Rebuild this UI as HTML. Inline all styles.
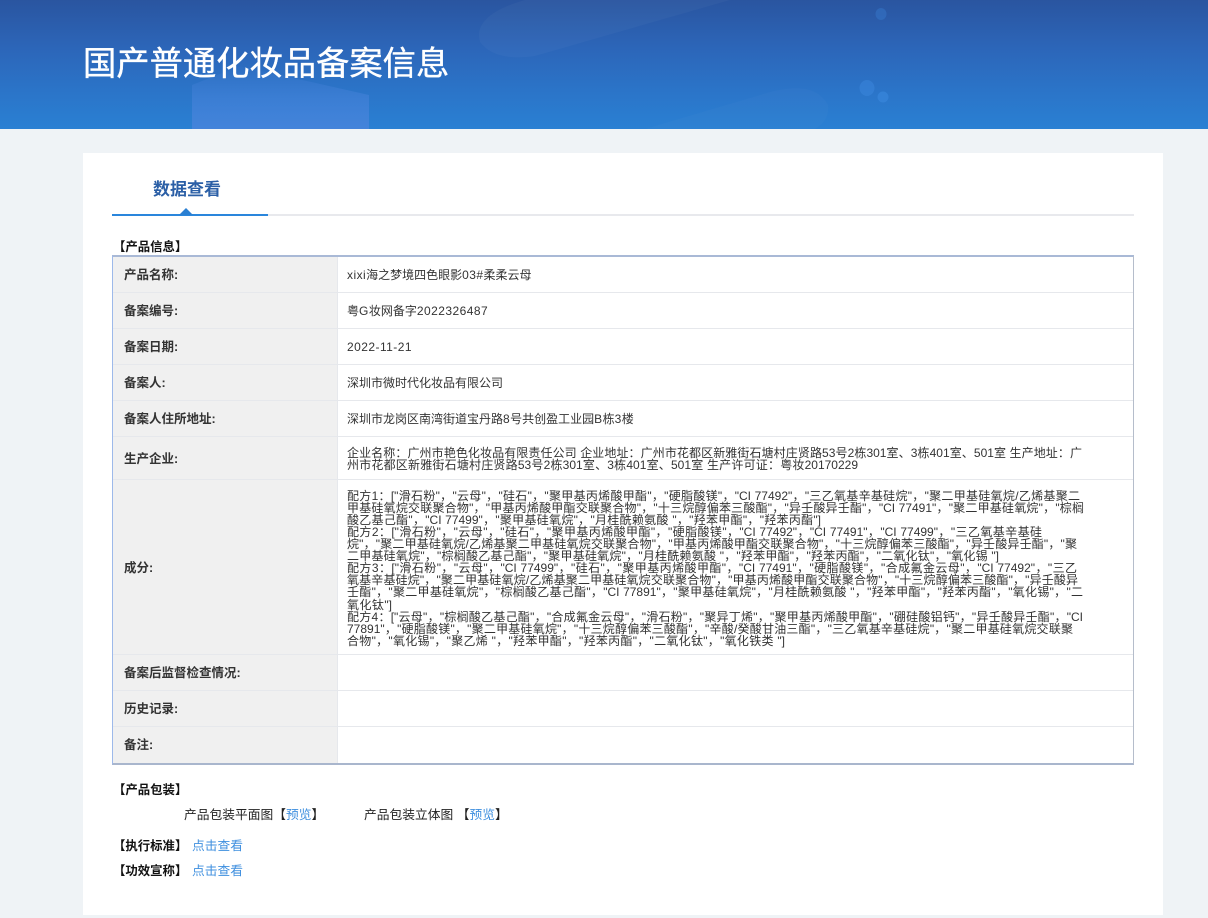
<!DOCTYPE html>
<html lang="zh-CN"><head><meta charset="utf-8"><title>国产普通化妆品备案信息</title>
<style>
html,body{margin:0;padding:0}
body{width:1208px;height:918px;position:relative;overflow:hidden;background:#eff3f6;font-family:"Liberation Sans","Noto Sans CJK SC",sans-serif;color:#333}
.a{position:absolute;white-space:nowrap}
.hd{position:absolute;left:0;top:0;width:1208px;height:129px;background:linear-gradient(180deg,#2a55a0 0%,#2c66b9 38%,#2b74c8 70%,#2a80d3 100%);overflow:hidden}
.card{position:absolute;left:83px;top:153px;width:1080px;height:762px;background:#fff}
.tb{position:absolute;left:112px;top:255px;width:1020px;height:506px;border:1px solid #a9b9d6;border-left-color:#9db9ea;border-top-width:2px;border-right-color:#b5bdcb;border-bottom-color:#a9b6cd;border-bottom-width:2px;background:#fff}
.r{position:absolute;left:113px;width:1020px;border-bottom:1px solid #e6e8ec}
.l{position:absolute;left:113px;width:224px;background:#f0f0f0;border-right:1px solid #e6e8ec;border-bottom:1px solid #e6e8ec}
.lb{position:absolute;left:124px;font-size:12.5px;font-weight:bold;color:#333;white-space:nowrap;line-height:18px}
.v{position:absolute;left:347px;font-size:12px;color:#333;white-space:nowrap;line-height:18px}
.v b{font-weight:normal;letter-spacing:.45px}
.s{position:absolute;left:113px;font-size:12.4px;font-weight:bold;color:#111;white-space:nowrap;line-height:16px}
.t{position:absolute;font-size:12.75px;color:#222;white-space:nowrap;line-height:16px}
a{color:#3f8fdf;text-decoration:none}
.i div{position:absolute;left:347px;font-size:12px;line-height:12px;height:12px;color:#333;white-space:normal;text-align:justify;text-align-last:justify;overflow:visible}
</style></head><body>
<div class="hd">
<svg width="1208" height="129" style="position:absolute;left:0;top:0">
<defs><linearGradient id="g" x1="0" y1="0" x2="0" y2="1"><stop offset="0" stop-color="#4a84dc" stop-opacity=".05"/><stop offset=".5" stop-color="#4a84dc" stop-opacity=".5"/><stop offset="1" stop-color="#4a84dc" stop-opacity=".8"/></linearGradient></defs>
<path d="M192 85L240 66L369 95V129H192Z" fill="url(#g)"/>
<path d="M525 0H730L535 56Q495 62 480 42Q472 15 525 0Z" fill="#fff" opacity=".03"/>
<path d="M645 129L770 92Q815 80 828 105Q830 120 815 129Z" fill="#fff" opacity=".02"/>
<ellipse cx="881" cy="14" rx="5.5" ry="6" fill="#3d8ae0" opacity=".3"/>
<ellipse cx="867" cy="88" rx="7.5" ry="8" fill="#3d8ae0" opacity=".45"/>
<ellipse cx="883" cy="97" rx="5.5" ry="5.5" fill="#3d8ae0" opacity=".55"/>
</svg>
<div class="a" style="left:83px;top:40px;font-size:33.3px;line-height:50px;color:#fff;-webkit-text-stroke:.35px #fff">国产普通化妆品备案信息</div>
</div>
<div class="card"></div>
<div class="a" style="left:153px;top:179px;font-size:17px;font-weight:bold;line-height:22px;color:#2b5fa6">数据查看</div>
<div class="a" style="left:112px;top:214px;width:1022px;height:2px;background:#e8e9ed"></div>
<div class="a" style="left:112px;top:214px;width:156px;height:2px;background:#2a86dc"></div>
<svg class="a" style="left:179px;top:208px" width="14" height="7"><path d="M0 7L7 0L14 7Z" fill="#2a7fd2"/></svg>
<div class="s" style="top:239px">【产品信息】</div>
<div class="tb"></div>
<div class="l" style="top:257px;height:35px"></div><div class="r" style="top:292px;height:0"></div>
<div class="l" style="top:293px;height:35px"></div><div class="r" style="top:328px;height:0"></div>
<div class="l" style="top:329px;height:35px"></div><div class="r" style="top:364px;height:0"></div>
<div class="l" style="top:365px;height:35px"></div><div class="r" style="top:400px;height:0"></div>
<div class="l" style="top:401px;height:35px"></div><div class="r" style="top:436px;height:0"></div>
<div class="l" style="top:437px;height:42px"></div><div class="r" style="top:479px;height:0"></div>
<div class="l" style="top:480px;height:174px"></div><div class="r" style="top:654px;height:0"></div>
<div class="l" style="top:655px;height:35px"></div><div class="r" style="top:690px;height:0"></div>
<div class="l" style="top:691px;height:35px"></div><div class="r" style="top:726px;height:0"></div>
<div class="l" style="top:727px;height:36px;border-bottom:0"></div>
<div class="lb" style="top:266px">产品名称:</div><div class="v" style="top:266px"><b>xixi</b>海之梦境四色眼影<b>03#</b>柔柔云母</div>
<div class="lb" style="top:302px">备案编号:</div><div class="v" style="top:302px">粤<b>G</b>妆网备字<b>2022326487</b></div>
<div class="lb" style="top:338px">备案日期:</div><div class="v" style="top:338px"><b>2022-11-21</b></div>
<div class="lb" style="top:374px">备案人:</div><div class="v" style="top:374px">深圳市微时代化妆品有限公司</div>
<div class="lb" style="top:410px">备案人住所地址:</div><div class="v" style="top:410px">深圳市龙岗区南湾街道宝丹路<b>8</b>号共创盈工业园<b>B</b>栋<b>3</b>楼</div>
<div class="lb" style="top:450px">生产企业:</div>
<div class="i">
<div style="top:447px;width:735px">企业名称：广州市艳色化妆品有限责任公司 企业地址：广州市花都区新雅街石塘村庄贤路53号2栋301室、3栋401室、501室 生产地址：广</div>
<div style="top:459px;width:511px">州市花都区新雅街石塘村庄贤路53号2栋301室、3栋401室、501室 生产许可证：粤妆20170229</div>
<div style="top:490px;width:733px">配方1：["滑石粉"，"云母"，"硅石"，"聚甲基丙烯酸甲酯"，"硬脂酸镁"，"CI 77492"，"三乙氧基辛基硅烷"，"聚二甲基硅氧烷/乙烯基聚二</div>
<div style="top:502px;width:737px">甲基硅氧烷交联聚合物"，"甲基丙烯酸甲酯交联聚合物"，"十三烷醇偏苯三酸酯"，"异壬酸异壬酯"，"CI 77491"，"聚二甲基硅氧烷"，"棕榈</div>
<div style="top:514px;width:474px">酸乙基己酯"，"CI 77499"，"聚甲基硅氧烷"，"月桂酰赖氨酸 "，"羟苯甲酯"，"羟苯丙酯"]</div>
<div style="top:526px;width:695px">配方2：["滑石粉"，"云母"，"硅石"，"聚甲基丙烯酸甲酯"，"硬脂酸镁"，"CI 77492"，"CI 77491"，"CI 77499"，"三乙氧基辛基硅</div>
<div style="top:538px;width:730px">烷"，"聚二甲基硅氧烷/乙烯基聚二甲基硅氧烷交联聚合物"，"甲基丙烯酸甲酯交联聚合物"，"十三烷醇偏苯三酸酯"，"异壬酸异壬酯"，"聚</div>
<div style="top:550px;width:652px">二甲基硅氧烷"，"棕榈酸乙基己酯"，"聚甲基硅氧烷"，"月桂酰赖氨酸 "，"羟苯甲酯"，"羟苯丙酯"，"二氧化钛"，"氧化锡 "]</div>
<div style="top:562px;width:730px">配方3：["滑石粉"，"云母"，"CI 77499"，"硅石"，"聚甲基丙烯酸甲酯"，"CI 77491"，"硬脂酸镁"，"合成氟金云母"，"CI 77492"，"三乙</div>
<div style="top:574px;width:731px">氧基辛基硅烷"，"聚二甲基硅氧烷/乙烯基聚二甲基硅氧烷交联聚合物"，"甲基丙烯酸甲酯交联聚合物"，"十三烷醇偏苯三酸酯"，"异壬酸异</div>
<div style="top:586px;width:736px">壬酯"，"聚二甲基硅氧烷"，"棕榈酸乙基己酯"，"CI 77891"，"聚甲基硅氧烷"，"月桂酰赖氨酸 "，"羟苯甲酯"，"羟苯丙酯"，"氧化锡"，"二</div>
<div style="top:599px;width:45px">氧化钛"]</div>
<div style="top:611px;width:736px">配方4：["云母"，"棕榈酸乙基己酯"，"合成氟金云母"，"滑石粉"，"聚异丁烯"，"聚甲基丙烯酸甲酯"，"硼硅酸铝钙"，"异壬酸异壬酯"，"CI</div>
<div style="top:623px;width:726px">77891"，"硬脂酸镁"，"聚二甲基硅氧烷"，"十三烷醇偏苯三酸酯"，"辛酸/癸酸甘油三酯"，"三乙氧基辛基硅烷"，"聚二甲基硅氧烷交联聚</div>
<div style="top:635px;width:438px">合物"，"氧化锡"，"聚乙烯 "，"羟苯甲酯"，"羟苯丙酯"，"二氧化钛"，"氧化铁类 "]</div>
</div>
<div class="lb" style="top:559px">成分:</div>
<div class="lb" style="top:664px">备案后监督检查情况:</div>
<div class="lb" style="top:700px">历史记录:</div>
<div class="lb" style="top:736px">备注:</div>
<div class="s" style="top:782px">【产品包装】</div>
<div class="t" style="left:184px;top:807px">产品包装平面图【<a href="#">预览</a>】</div>
<div class="t" style="left:364px;top:807px">产品包装立体图 【<a href="#">预览</a>】</div>
<div class="s" style="top:838px">【执行标准】</div>
<div class="t" style="left:192px;top:838px"><a href="#">点击查看</a></div>
<div class="s" style="top:863px">【功效宣称】</div>
<div class="t" style="left:192px;top:863px"><a href="#">点击查看</a></div>
</body></html>
